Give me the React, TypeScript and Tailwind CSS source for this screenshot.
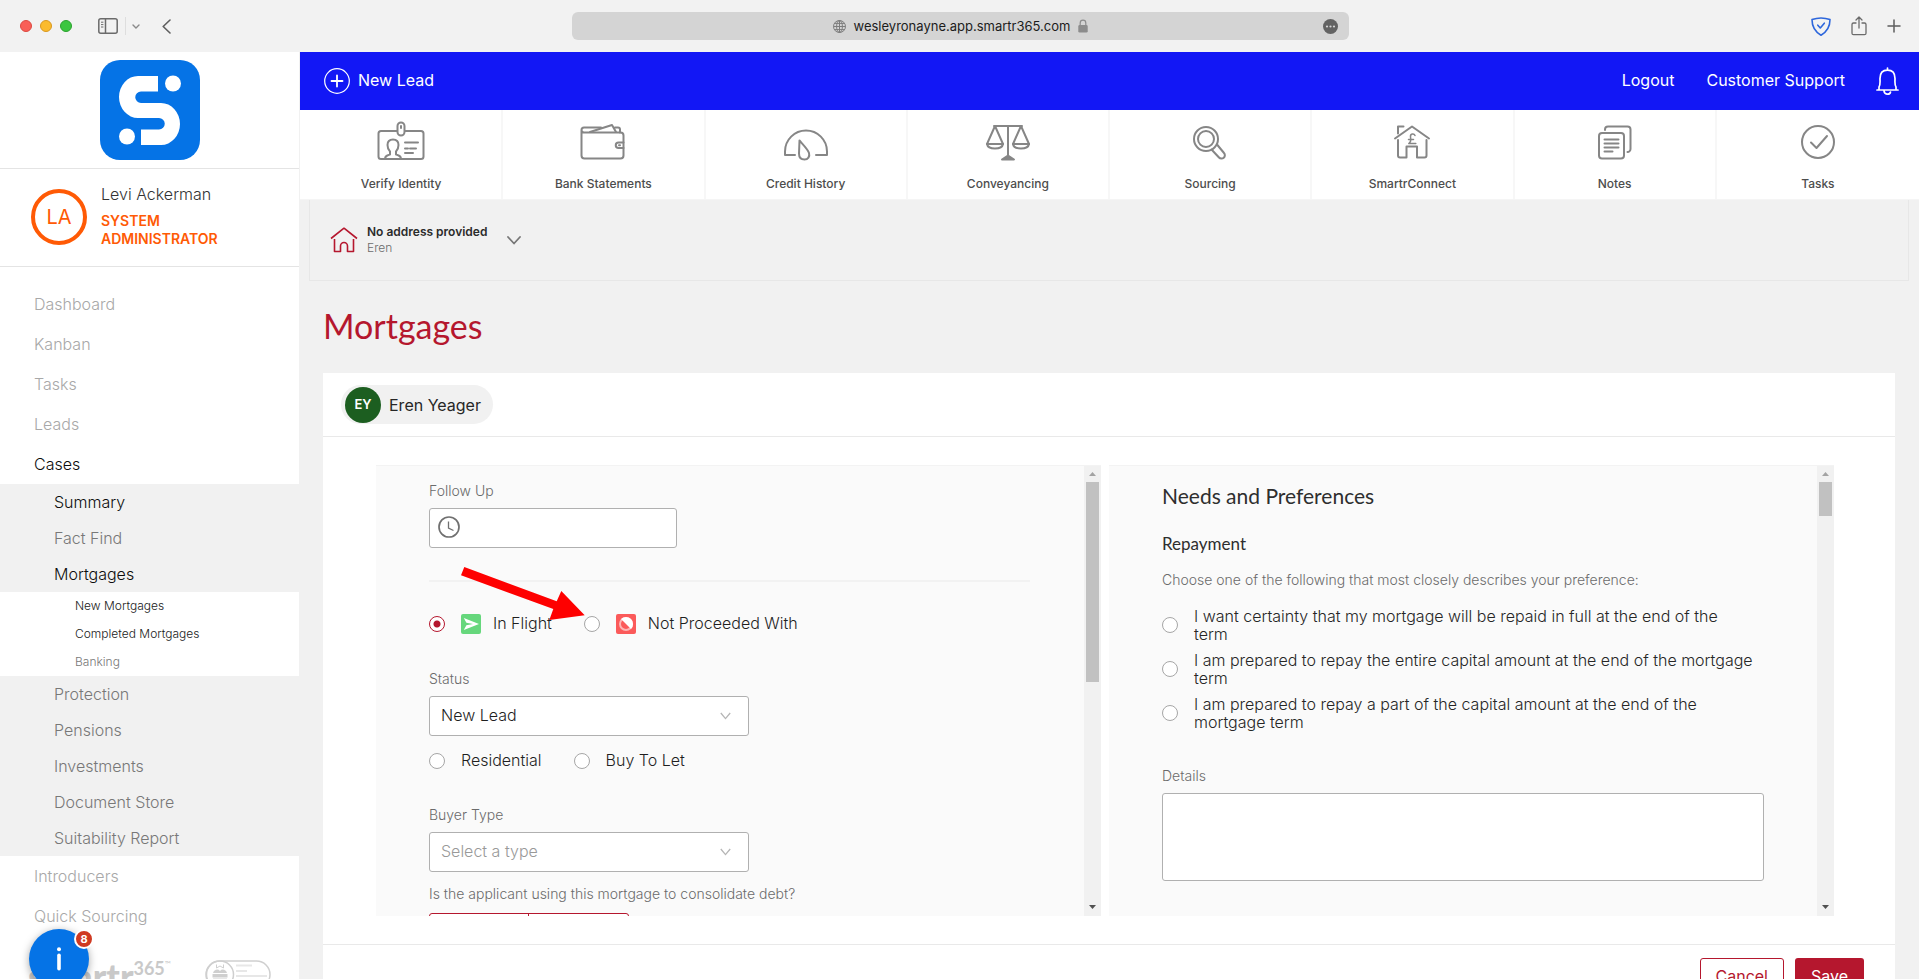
import React from "react";

const INTER = "font-['Inter','Liberation_Sans',sans-serif]";
const LATO = "font-['Lato','Open_Sans',sans-serif]";

/* ---------- Browser chrome ---------- */

function BrowserBar() {
  return (
    <div className="flex h-[52px] shrink-0 items-center bg-[#f2f2f2] pr-[18px] pl-5">
      <div className="flex flex-1 items-center">
        <div className="flex gap-2">
          <span className="size-3 rounded-full border border-[#dc4940] bg-[#f95f57]" />
          <span className="size-3 rounded-full border border-[#d9981f] bg-[#fbbb2d]" />
          <span className="size-3 rounded-full border border-[#2ba22e] bg-[#3bc63f]" />
        </div>
        <button aria-label="Sidebar" className="ml-[26px]">
          <svg width="20" height="16" viewBox="0 0 20 16" fill="none" stroke="#6b6b6b" strokeWidth="1.5">
            <rect x="0.8" y="0.8" width="18.4" height="14.4" rx="2" />
            <path d="M7.5 1v14" />
            <path d="M3 4.2h2.4M3 6.6h2.4M3 9h2.4" strokeWidth="1" />
          </svg>
        </button>
        <span className="ml-[7px] h-[18px] w-px bg-[#dedede]" />
        <button aria-label="Tab groups" className="ml-[6px]">
          <svg width="8" height="5" viewBox="0 0 8 5" fill="none" stroke="#8a8a8a" strokeWidth="1.4" strokeLinecap="round">
            <path d="M1 1l3 3 3-3" />
          </svg>
        </button>
        <button aria-label="Back" className="ml-[22px]">
          <svg width="9" height="15" viewBox="0 0 9 15" fill="none" stroke="#5e5e5e" strokeWidth="1.6" strokeLinecap="round" strokeLinejoin="round">
            <path d="M8 1L1.2 7.5 8 14" />
          </svg>
        </button>
      </div>
      <div className="flex h-7 w-[40.5vw] items-center rounded-md bg-[#d4d4d4] px-[11px]">
        <span className="w-[15px]" />
        <div className="flex flex-1 items-center justify-center gap-2">
          <svg width="13" height="13" viewBox="0 0 13 13" fill="none" stroke="#7d7d7d" strokeWidth="1">
            <circle cx="6.5" cy="6.5" r="6" />
            <ellipse cx="6.5" cy="6.5" rx="2.9" ry="6" />
            <path d="M.5 6.5h12M6.5.5v12M1.4 3.4h10.2M1.4 9.6h10.2" />
          </svg>
          <span className="text-[13px] leading-4 text-[#1c1c1c]">wesleyronayne.app.smartr365.com</span>
          <svg width="10" height="14" viewBox="0 0 10 14">
            <rect x="0.3" y="6" width="9.4" height="7.6" rx="1.4" fill="#8c8c8c" />
            <path d="M2.2 6.5V4a2.8 2.8 0 0 1 5.6 0v2.5" fill="none" stroke="#8c8c8c" strokeWidth="1.2" />
          </svg>
        </div>
        <svg width="15" height="15" viewBox="0 0 15 15">
          <circle cx="7.5" cy="7.5" r="7.5" fill="#636363" />
          <g fill="#d4d4d4">
            <circle cx="4" cy="7.5" r="1.1" />
            <circle cx="7.5" cy="7.5" r="1.1" />
            <circle cx="11" cy="7.5" r="1.1" />
          </g>
        </svg>
      </div>
      <div className="flex flex-1 items-center justify-end gap-5">
        <svg width="20" height="19" viewBox="0 0 20 19" fill="none" stroke="#2e67dc" strokeWidth="1.6" strokeLinejoin="round" strokeLinecap="round">
          <path d="M10 1c3 0 6 .5 9 1.600 0 7-2.500 12-9 15.600C3.500 14.600 1 9.600 1 2.600 4 1.500 7 1 10 1z" />
          <path d="M6.800 8.200l2.500 2.800 4-4.800" />
        </svg>
        <svg width="16" height="20" viewBox="0 0 16 20" fill="none" stroke="#6b6b6b" strokeWidth="1.3" strokeLinecap="round" strokeLinejoin="round">
          <path d="M5 7H2.500A1.500 1.500 0 0 0 1 8.500v8.700A1.500 1.500 0 0 0 2.500 18.700h11a1.500 1.500 0 0 0 1.500-1.500V8.500A1.500 1.500 0 0 0 13.500 7H11M8 12V1.200M5 4l3-3 3 3" />
        </svg>
        <svg width="14" height="14" viewBox="0 0 14 14" fill="none" stroke="#5e5e5e" strokeWidth="1.5" strokeLinecap="round">
          <path d="M7 1v12M1 7h12" />
        </svg>
      </div>
    </div>
  );
}

/* ---------- Sidebar ---------- */

function NavLink({ label, active = false }: { label: string; active?: boolean }) {
  return (
    <a href="#" className={`flex h-10 items-center pl-[34px] text-base ${active ? "text-[#0d0d0d]" : "text-[#a8a8a8]"}`}>
      {label}
    </a>
  );
}

function SubLink({ label, active = false }: { label: string; active?: boolean }) {
  return (
    <a href="#" className={`flex h-9 items-center pl-[54px] text-base ${active ? "text-[#0d0d0d]" : "text-[#787878]"}`}>
      {label}
    </a>
  );
}

function LeafLink({ label, active = false }: { label: string; active?: boolean }) {
  return (
    <a href="#" className={`flex h-7 items-center pl-[75px] text-xs ${active ? "text-[#1a1a1a]" : "text-[#787878]"}`}>
      {label}
    </a>
  );
}

function Sidebar() {
  return (
    <aside className="relative flex w-[299px] shrink-0 flex-col overflow-hidden bg-white">
      <div className="flex justify-center border-b border-[#e4e4e4] pt-2 pb-2">
        <svg width="100" height="100" viewBox="0 0 100 100">
          <rect width="100" height="100" rx="20" fill="#0573e6" />
          <path
            d="M58 16H38a19 21 0 0 0 0 42H59a5 5 0 0 1 0 11.500H41V85H61a19 21 0 0 0 0-42H41a5 5 0 0 1 0-11.500H58z"
            fill="#fff"
          />
          <circle cx="73" cy="23.500" r="8" fill="#fff" />
          <circle cx="27" cy="76.500" r="8" fill="#fff" />
        </svg>
      </div>
      <div className="flex items-start border-b border-[#e4e4e4] pt-[15px] pb-[18px] pl-[31px]">
        <div className="mt-[5px] flex size-14 items-center justify-center rounded-full border-4 border-[#ff5a05] text-xl text-[#ff5a05]">
          LA
        </div>
        <div className="ml-[14px] flex flex-col">
          <span className="text-base leading-5 font-light text-[#333]">Levi Ackerman</span>
          <span className="mt-2 w-32 text-sm leading-[18px] font-semibold text-[#ff5a05]">SYSTEM ADMINISTRATOR</span>
        </div>
      </div>
      <nav className="mt-[17px] font-light">
        <NavLink label="Dashboard" />
        <NavLink label="Kanban" />
        <NavLink label="Tasks" />
        <NavLink label="Leads" />
        <NavLink label="Cases" active />
        <div className="bg-[#f1f1f1]">
          <SubLink label="Summary" active />
          <SubLink label="Fact Find" />
          <SubLink label="Mortgages" active />
          <div className="bg-white">
            <LeafLink label="New Mortgages" active />
            <LeafLink label="Completed Mortgages" active />
            <LeafLink label="Banking" />
          </div>
          <SubLink label="Protection" />
          <SubLink label="Pensions" />
          <SubLink label="Investments" />
          <SubLink label="Document Store" />
          <SubLink label="Suitability Report" />
        </div>
        <NavLink label="Introducers" />
        <NavLink label="Quick Sourcing" />
      </nav>
      <div className={`mt-5 flex items-start pl-[28px] text-[#c9c9c9] ${LATO}`}>
        <span className="text-4xl font-black">smartr</span>
        <span className="text-lg leading-6 font-bold">365</span>
        <span className="text-[8px] leading-4">™</span>
        <svg className="mt-1 ml-[34px]" width="66" height="28" viewBox="0 0 66 28" fill="none" stroke="#cfcfcf" strokeWidth="1.500">
          <rect x="1" y="1" width="64" height="27" rx="13.500" />
          <circle cx="15" cy="14.500" r="13.500" />
          <path d="M8 13a4 4 0 0 1 7-2 4 4 0 0 1 7 2z M7.500 14h15v3.500h-15z M8 18.500h14c-1 3-4 5.500-7 5.500s-6-2.500-7-5.500z" fill="#cfcfcf" stroke="none" />
          <path d="M11.500 4.500v3.500l3.500-2 3.500 2V4.500" strokeWidth="1" />
          <path d="M31 5.500h16M31 11h11M31 16h31" strokeWidth="2" strokeOpacity="0.5" />
        </svg>
      </div>
      <button
        aria-label="Information, 8 unread"
        className="absolute top-[877px] left-[29px] flex size-[60px] items-center justify-center rounded-full bg-[#0573e6] shadow-[0_2px_8px_rgba(0,0,0,0.35)]"
      >
        <svg width="6" height="24" viewBox="0 0 6 24" fill="#fff">
          <circle cx="3" cy="2.200" r="2" />
          <rect x="1.200" y="6.500" width="3.600" height="17" rx="1.800" />
        </svg>
        <span className="absolute top-0 -right-[5px] flex size-5 items-center justify-center rounded-full border-2 border-white bg-[#cf3a22] text-[11px] font-bold text-white">
          8
        </span>
      </button>
    </aside>
  );
}

/* ---------- Toolbar ---------- */

const tools: { label: string; icon: React.ReactNode }[] = [
  {
    label: "Verify Identity",
    icon: (
      <>
        <path d="M20 10H4a2.500 2.500 0 0 0-2.500 2.500v23A2.500 2.500 0 0 0 4 38h40a2.500 2.500 0 0 0 2.500-2.500v-23A2.500 2.500 0 0 0 44 10H28" />
        <rect x="20.500" y="1.500" width="7" height="13" rx="3.500" />
        <path d="M24 5v2" />
        <path d="M8 38c0-3 2-3.500 5-4.500v-3c-2-2-2.500-4.500-2.500-6.500 0-3.500 2-5.500 5.500-5.500s5.500 2 5.500 5.500c0 2-.5 4.500-2.500 6.500v3c3 1 5 1.500 5 4.500" />
        <path d="M28 21.500h13M28 27.500h3M33 27.500h6M28 32h8" />
      </>
    ),
  },
  {
    label: "Bank Statements",
    icon: (
      <>
        <path d="M2.500 9v25.500A3 3 0 0 0 5.500 37.500h36a3 3 0 0 0 3-3V14.500a3 3 0 0 0-3-3H5a2.500 2.500 0 0 1 0-5h17" />
        <path d="M11 11L33 4l4 7M36 6.500h3a2 2 0 0 1 2 2v3" />
        <path d="M44.500 21.500h-5a2.700 2.700 0 0 0 0 5.500h5" />
        <path d="M40 24.200h1" />
      </>
    ),
  },
  {
    label: "Credit History",
    icon: (
      <>
        <path d="M13 34H3v-3.500a21 21 0 0 1 42 0V34H34" />
        <path d="M17.500 19.500l-.5 13c0 3.500 2 6 5.500 6s5.500-3 4.500-6.500c-1-3.500-6-8.500-9.500-12.500z" />
      </>
    ),
  },
  {
    label: "Conveyancing",
    icon: (
      <>
        <path d="M10 5h28M24 5v31" />
        <path d="M11 5L3 23h16zM37 5l-8 18h16z" />
        <path d="M3 23c1 6 15 6 16 0M29 23c1 6 15 6 16 0" />
        <path d="M18 38.500l6-4 6 4z" fill="#868686" />
      </>
    ),
  },
  {
    label: "Sourcing",
    icon: (
      <>
        <circle cx="20" cy="18" r="12" />
        <circle cx="20" cy="18" r="8" />
        <path d="M31 23.500l7 8.500a3.300 3.300 0 0 1-5 4.500l-7.500-8" />
      </>
    ),
  },
  {
    label: "SmartrConnect",
    icon: (
      <>
        <path d="M7 17.500L24 5.500l17 12" />
        <path d="M10 12.500V5.500h5.500" />
        <path d="M10 19v15.500a2 2 0 0 0 2 2h6.500V25.500h10.500v11H36.500a2 2 0 0 0 2-2V19" />
        <path d="M27 14.500c-1-2.500-5-2-4.500 1.500l.3 2.500c.2 2-.5 3-2 4h7M20.500 18.500h5" strokeWidth="1.500" />
      </>
    ),
  },
  {
    label: "Notes",
    icon: (
      <>
        <rect x="8" y="12" width="25" height="25.500" rx="3" />
        <path d="M14 9V8.500a3 3 0 0 1 3-3h19.500a3 3 0 0 1 3 3V28a3 3 0 0 1-3 3" />
        <path d="M13.500 18.500h14M13.500 22.500h14M13.500 26.500h14M13.500 30.500h8" />
      </>
    ),
  },
  {
    label: "Tasks",
    icon: (
      <>
        <circle cx="24" cy="21" r="16" />
        <path d="M17 21.500l5.500 5.500 10.500-12" />
      </>
    ),
  },
];

function Toolbar() {
  return (
    <nav className="grid shrink-0 grid-cols-8 border-b border-[#f5f5f5] bg-white pl-px">
      {tools.map((tool) => (
        <button key={tool.label} className="flex h-[89px] flex-col items-center border-r-2 border-[#f7f7f7] pt-[11px] last:border-r-0">
          <svg width="48" height="42" viewBox="0 0 48 42" fill="none" stroke="#868686" strokeWidth="2" strokeLinecap="round" strokeLinejoin="round">
            {tool.icon}
          </svg>
          <span className="mt-[13px] text-xs leading-4 font-medium text-[#4d4d4d]">{tool.label}</span>
        </button>
      ))}
    </nav>
  );
}

function TopBar() {
  return (
    <header className="flex h-[58px] shrink-0 items-center bg-[#1217f5] pr-5 pl-6 text-base text-white">
      <button className="flex items-center gap-2">
        <svg width="26" height="26" viewBox="0 0 26 26" fill="none" stroke="#fff">
          <circle cx="13" cy="13" r="12.300" strokeWidth="1.200" />
          <path d="M13 7.500v11M7.500 13h11" strokeWidth="1.800" strokeLinecap="round" />
        </svg>
        <span className="pb-0.5">New Lead</span>
      </button>
      <a href="#" className="ml-auto pb-0.5">Logout</a>
      <a href="#" className="ml-8 pb-0.5">Customer Support</a>
      <button aria-label="Notifications" className="ml-[31px]">
        <svg width="23" height="28" viewBox="0 0 23 28" fill="none" stroke="#fff" strokeWidth="1.700" strokeLinecap="round" strokeLinejoin="round">
          <path d="M11.500 1v2M1 23h21M3 23v-3c1.500-2 1-5 1-8.500C4 6 7 3.200 11.500 3.200S19 6 19 11.500c0 3.500-.5 6.500 1 8.500v3M8 23.500c0 4.500 6 4.500 6.500 1.500" />
        </svg>
      </button>
    </header>
  );
}

function AddressBar() {
  return (
    <div className="mr-[10px] ml-[9px] flex h-[81px] shrink-0 items-center border border-t-0 border-[#e7e7e7] pl-5">
      <svg width="28" height="26" viewBox="0 0 28 26" fill="none" stroke="#b5172e" strokeWidth="1.600" strokeLinejoin="round">
        <path d="M1 11.500L14 1.200l13 10.300" />
        <path d="M4.500 12v12.500h6V19a3.500 3.500 0 0 1 7 0v5.500h6V12" />
      </svg>
      <div className="ml-[9px] flex flex-col">
        <span className="text-xs leading-4 font-semibold text-[#2b2b2b]">No address provided</span>
        <span className="text-xs leading-4 font-light text-[#6b6b6b]">Eren</span>
      </div>
      <button aria-label="Show addresses" className="ml-5">
        <svg width="14" height="9" viewBox="0 0 14 9" fill="none" stroke="#777" strokeWidth="1.800" strokeLinecap="round" strokeLinejoin="round">
          <path d="M1 1l6 6.500L13 1" />
        </svg>
      </button>
    </div>
  );
}

/* ---------- Form parts ---------- */

function Radio({ name, id, checked = false }: { name: string; id: string; checked?: boolean }) {
  return (
    <input
      type="radio"
      id={id}
      name={name}
      defaultChecked={checked}
      className="size-4 shrink-0 appearance-none rounded-full border border-[#a6a6a6] bg-white checked:border-[#b5172e] checked:bg-[radial-gradient(circle,#b5172e_3px,transparent_4px)]"
    />
  );
}

function SelectBox({ id, options, muted = false }: { id: string; options: string[]; muted?: boolean }) {
  return (
    <div className="relative w-80">
      <select
        id={id}
        className={`h-10 w-full appearance-none rounded-[3px] border border-[#b0b0b0] bg-white px-[11px] pb-0.5 text-base font-light ${muted ? "text-[#999]" : "text-[#1f1f1f]"}`}
      >
        {options.map((o) => (
          <option key={o}>{o}</option>
        ))}
      </select>
      <svg className="pointer-events-none absolute top-4 right-[18px]" width="11" height="8" viewBox="0 0 11 8" fill="none" stroke="#b5b5b5" strokeWidth="1.300">
        <path d="M.8 1l4.700 5.600L10.200 1" />
      </svg>
    </div>
  );
}

function ScrollPanel({ thumb, children }: { thumb: "long" | "short"; children: React.ReactNode }) {
  return (
    <div className="flex h-[451px] min-w-0 flex-1 border-t border-[#f3f3f3] bg-[#fafafa]">
      <div className="min-w-0 flex-1 overflow-hidden">{children}</div>
      <div className="flex w-[17px] shrink-0 flex-col items-center bg-[#f1f1f1]">
        <svg className="my-[6px] shrink-0" width="7" height="4" viewBox="0 0 7 4" fill="#a3a3a3">
          <path d="M0 4L3.500 0 7 4z" />
        </svg>
        <div className={`w-[13px] bg-[#c1c1c1] ${thumb === "long" ? "h-[200px]" : "h-[34px]"}`} />
        <svg className="mt-auto mb-[7px] shrink-0" width="7" height="4" viewBox="0 0 7 4" fill="#505050">
          <path d="M0 0l3.500 4L7 0z" />
        </svg>
      </div>
    </div>
  );
}

const fieldLabel = "block text-sm leading-5 font-light text-[#6b6b6b]";

function CaseForm() {
  return (
    <div className="pt-[15px] pr-[54px] pl-[53px]">
      <label htmlFor="follow-up" className={fieldLabel}>Follow Up</label>
      <div className="relative mt-[7px] w-[248px]">
        <input id="follow-up" type="text" className="h-10 w-full rounded-[3px] border border-[#b0b0b0] bg-white pr-3 pl-10 text-base" />
        <svg className="pointer-events-none absolute top-2 left-[9px]" width="22" height="22" viewBox="0 0 22 22" fill="none" stroke="#707070">
          <circle cx="11" cy="11" r="10" strokeWidth="1.700" />
          <path d="M10.500 5.500v6.500l5 2.500" strokeWidth="1.300" />
        </svg>
      </div>
      <hr className="mt-8 border-t-2 border-[#f2f2f2]" />
      <div className="relative mt-[30px] flex h-6 items-center text-base font-light text-[#1f1f1f]">
        <Radio name="progress" id="in-flight" checked />
        <label htmlFor="in-flight" className="ml-4 flex items-center">
          <svg width="20" height="20" viewBox="0 0 20 20">
            <rect width="20" height="20" rx="2" fill="#66d77c" />
            <path d="M2.800 4L18 10 2.800 16l2.600-4.800L12 10 5.400 8.800z" fill="#fff" />
          </svg>
          <span className="ml-3 pb-0.5">In Flight</span>
        </label>
        <span className="w-8" />
        <Radio name="progress" id="not-proceeded" />
        <label htmlFor="not-proceeded" className="ml-4 flex items-center">
          <svg width="20" height="20" viewBox="0 0 20 20">
            <rect width="20" height="20" rx="2" fill="#fb5a5a" />
            <circle cx="10" cy="10" r="6" fill="#fb5a5a" stroke="#fdb5b5" strokeWidth="2" />
            <path d="M5 5a7 7 0 0 1 10 10z" fill="#fff" />
          </svg>
          <span className="ml-3 pb-0.5">Not Proceeded With</span>
        </label>
        <svg className="pointer-events-none absolute -top-[46px] left-[31px]" width="126" height="56" viewBox="0 0 126 56">
          <path d="M4.300 1L1 9.300l92.300 33.700-4 11 35.400-4.700L101.300 25l-4.600 10.300z" fill="#fe0000" />
        </svg>
      </div>
      <label htmlFor="status" className={`mt-[33px] mb-[7px] ${fieldLabel}`}>Status</label>
      <SelectBox id="status" options={["New Lead"]} />
      <div className="mt-[13px] flex h-6 items-center text-base font-light text-[#1f1f1f]">
        <Radio name="use" id="residential" />
        <label htmlFor="residential" className="ml-4 pb-0.5">Residential</label>
        <span className="w-8" />
        <Radio name="use" id="buy-to-let" />
        <label htmlFor="buy-to-let" className="ml-4 pb-0.5">Buy To Let</label>
      </div>
      <label htmlFor="buyer-type" className={`mt-8 mb-[7px] ${fieldLabel}`}>Buyer Type</label>
      <SelectBox id="buyer-type" options={["Select a type"]} muted />
      <p className={`mt-3 ${fieldLabel}`}>Is the applicant using this mortgage to consolidate debt?</p>
      <div className="mt-[9px] h-9 w-[200px] rounded-[3px] border border-[#b5172e] bg-white">
        <div className="mr-auto h-full w-1/2 border-r border-[#b5172e]" />
      </div>
    </div>
  );
}

const repaymentOptions = [
  "I want certainty that my mortgage will be repaid in full at the end of the term",
  "I am prepared to repay the entire capital amount at the end of the mortgage term",
  "I am prepared to repay a part of the capital amount at the end of the mortgage term",
];

function Preferences() {
  return (
    <div className="pt-4 pr-[53px] pl-[53px]">
      <h2 className={`text-[21px] leading-7 text-[#2e2e2e] ${LATO}`}>Needs and Preferences</h2>
      <h3 className={`mt-[22px] text-[17px] leading-6 text-[#2e2e2e] ${LATO}`}>Repayment</h3>
      <p className={`mt-[14px] ${fieldLabel}`}>Choose one of the following that most closely describes your preference:</p>
      <div className="mt-[17px] flex flex-col gap-2">
        {repaymentOptions.map((text, i) => (
          <div key={text} className="flex items-center">
            <Radio name="repayment" id={`repayment-${i}`} />
            <label htmlFor={`repayment-${i}`} className="ml-4 max-w-[560px] text-base leading-[18px] font-light text-[#262626]">
              {text}
            </label>
          </div>
        ))}
      </div>
      <label htmlFor="details" className={`mt-[35px] mb-[7px] ${fieldLabel}`}>Details</label>
      <textarea id="details" className="block h-[88px] w-full resize-none rounded-[3px] border border-[#b0b0b0] bg-white p-2" />
    </div>
  );
}

export default function App() {
  return (
    <div className={`flex h-screen flex-col overflow-hidden bg-white ${INTER}`}>
      <BrowserBar />
      <div className="flex min-h-0 flex-1">
        <Sidebar />
        <main className="flex min-w-0 flex-1 flex-col overflow-hidden bg-[#f1f1f1] pl-px">
          <TopBar />
          <Toolbar />
          <AddressBar />
          <h1 className={`mt-6 ml-[23px] shrink-0 text-[34px] leading-[42px] text-[#b5172e] ${LATO}`}>Mortgages</h1>
          <section className="mt-[26px] mr-6 ml-[23px] shrink-0 bg-white">
            <div className="flex h-16 items-center border-b border-[#e9e9e9] pl-[18px]">
              <div className="flex h-[39px] items-center rounded-full bg-[#f1f1f1] pr-3 pl-1">
                <span className="flex size-9 items-center justify-center rounded-full bg-[#1c5e20] text-[13px] font-semibold text-white">EY</span>
                <span className="ml-2 text-base text-[#262626]">Eren Yeager</span>
              </div>
            </div>
            <div className="flex gap-2 pt-7 pr-[61px] pb-7 pl-[53px]">
              <ScrollPanel thumb="long">
                <CaseForm />
              </ScrollPanel>
              <ScrollPanel thumb="short">
                <Preferences />
              </ScrollPanel>
            </div>
            <div className="flex justify-end gap-[11px] border-t border-[#e9e9e9] pt-[13px] pr-[31px] pb-4 text-base">
              <button className="h-9 rounded-[3px] border border-[#b5172e] bg-white px-[15px] text-[#b5172e]">Cancel</button>
              <button className="h-9 rounded-[3px] bg-[#b5172e] px-4 text-white">Save</button>
            </div>
          </section>
        </main>
      </div>
    </div>
  );
}
